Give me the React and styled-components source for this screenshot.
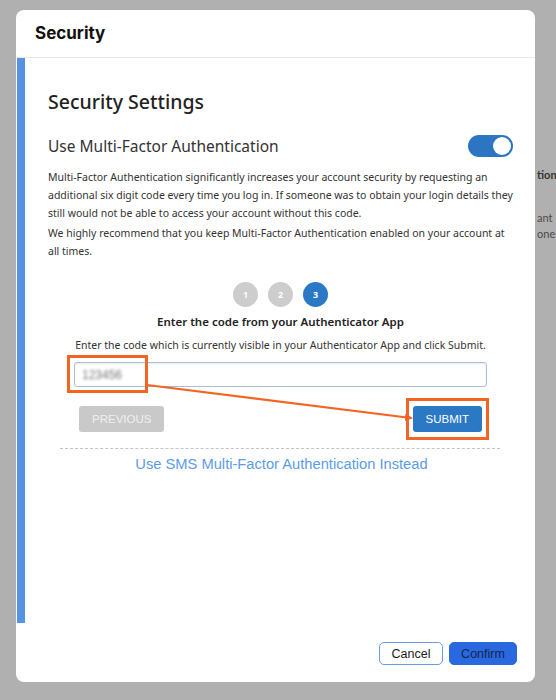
import styled, { createGlobalStyle } from "styled-components";

const GlobalStyle = createGlobalStyle`
  html, body {
    margin: 0;
    padding: 0;
    background: #b0b0b0;
  }
  * {
    box-sizing: border-box;
  }
`;

const segoe = `"Noto Sans", "Open Sans", sans-serif`;
const arial = `"Liberation Sans", Arial, sans-serif`;

const App = () => {
  return (
    <>
      <GlobalStyle />
      <Page>
        <Modal>
          <ModalHeader>Security</ModalHeader>
          <ModalBody>
            <Frame>
              <SettingsTitle>Security Settings</SettingsTitle>
              <ToggleRow>
                <ToggleLabel>Use Multi-Factor Authentication</ToggleLabel>
                <Toggle $on>
                  <Knob />
                </Toggle>
              </ToggleRow>
              <Paragraph $gap={11}>
                Multi-Factor Authentication significantly increases your account security by requesting an
                additional six digit code every time you log in. If someone was to obtain your login details they
                still would not be able to access your account without this code.
              </Paragraph>
              <Paragraph $gap={2}>
                We highly recommend that you keep Multi-Factor Authentication enabled on your account at
                all times.
              </Paragraph>

              {/* Setup wizard, step 3 */}
              <Wizard>
                <Steps>
                  <Step>1</Step>
                  <Step>2</Step>
                  <Step $active>3</Step>
                </Steps>
                <StepTitle>Enter the code from your Authenticator App</StepTitle>
                <StepText>Enter the code which is currently visible in your Authenticator App and click Submit.</StepText>
                <CodeInput>
                  <Blurred>123456</Blurred>
                </CodeInput>
                <WizardButtons>
                  <WizardButton $disabled>PREVIOUS</WizardButton>
                  <WizardButton>SUBMIT</WizardButton>
                </WizardButtons>
              </Wizard>
              <Divider />
              <SmsLink>Use SMS Multi-Factor Authentication Instead</SmsLink>
            </Frame>
          </ModalBody>
          <ModalFooter>
            <FooterButton>Cancel</FooterButton>
            <FooterButton $primary>Confirm</FooterButton>
          </ModalFooter>
        </Modal>

        {/* page behind the overlay, peeking out on the right */}
        <Behind>
          <BehindLine $bold $gap={157}>tion</BehindLine>
          <BehindLine $gap={27}>ant</BehindLine>
          <BehindLine $gap={0}>one</BehindLine>
        </Behind>

        {/* orange annotation drawn over the screenshot */}
        <Annotation width="556" height="700" viewBox="0 0 556 700">
          <defs>
            <marker id="arrow" markerWidth="8" markerHeight="8" refX="6" refY="4" orient="auto" markerUnits="userSpaceOnUse">
              <path d="M0,0 L8,4 L0,8 Z" fill="#f26522" />
            </marker>
          </defs>
          <rect x="68.5" y="356.5" width="78" height="35" fill="none" stroke="#f26522" strokeWidth="3" />
          <rect x="407.5" y="399.5" width="80" height="39" fill="none" stroke="#f26522" strokeWidth="3" />
          <line x1="147" y1="385" x2="411" y2="418" stroke="#f26522" strokeWidth="2" markerEnd="url(#arrow)" />
        </Annotation>
      </Page>
    </>
  );
};

export default App;

// Styled Components
const Page = styled.div`
  position: relative;
  width: 556px;
  height: 700px;
  padding: 10px 0 18px 16px;
  display: flex;
  overflow: hidden;
`;

const Modal = styled.div`
  width: 519px;
  height: 672px;
  flex-shrink: 0;
  background: #fff;
  border-radius: 8px;
  display: flex;
  flex-direction: column;
  overflow: hidden;
`;

const ModalHeader = styled.div`
  height: 48px;
  flex-shrink: 0;
  display: flex;
  align-items: center;
  padding: 0 19px 2px;
  border-bottom: 1px solid #e8e8e8;
  font-family: Inter, sans-serif;
  font-size: 17px;
  font-weight: 700;
  color: #111;
`;

const ModalBody = styled.div`
  flex: 1;
  display: flex;
  flex-direction: column;
`;

const Frame = styled.div`
  height: 565px;
  margin-left: 1px;
  border-left: 8px solid #5592e3;
  padding: 32px 20px 0 23px;
  font-family: ${segoe};
  color: #333;
`;

const SettingsTitle = styled.h2`
  margin: 0;
  font-size: 19.5px;
  line-height: 24px;
  font-weight: 500;
  color: #222;
`;

const ToggleRow = styled.div`
  margin-top: 21px;
  height: 22px;
  display: flex;
  align-items: center;
  justify-content: space-between;
`;

const ToggleLabel = styled.div`
  font-size: 15.5px;
  color: #333;
`;

const Toggle = styled.div`
  width: 45px;
  height: 22px;
  border-radius: 11px;
  padding: 2px;
  display: flex;
  justify-content: ${({ $on }) => ($on ? "flex-end" : "flex-start")};
  background: ${({ $on }) => ($on ? "#2b75c2" : "#ccc")};
  margin-right: 2px;
`;

const Knob = styled.div`
  width: 18px;
  height: 18px;
  border-radius: 50%;
  background: #fff;
`;

const Paragraph = styled.p`
  margin: ${({ $gap }) => $gap}px 0 0;
  font-size: 10.5px;
  line-height: 18px;
  color: #333;
`;

const Wizard = styled.div`
  margin: 22px 15px 0 12px;
  padding: 0 13px 0 14px;
  display: flex;
  flex-direction: column;
  align-items: stretch;
  text-align: center;
`;

const Steps = styled.div`
  display: flex;
  justify-content: center;
  gap: 10px;
`;

const Step = styled.div`
  width: 25px;
  height: 25px;
  border-radius: 50%;
  display: flex;
  align-items: center;
  justify-content: center;
  font-family: ${segoe};
  font-size: 9px;
  font-weight: 700;
  color: #fff;
  background: ${({ $active }) => ($active ? "#2b78c5" : "#cdcdcd")};
`;

const StepTitle = styled.div`
  margin-top: 7px;
  font-size: 11.5px;
  line-height: 16px;
  font-weight: 600;
  color: #222;
`;

const StepText = styled.div`
  margin-top: 7px;
  font-size: 10.5px;
  line-height: 16px;
  color: #333;
`;

const CodeInput = styled.div`
  margin-top: 9px;
  height: 25px;
  border: 1px solid #a9bfd6;
  border-radius: 3px;
  box-shadow: inset 0 1px 2px rgba(0, 0, 0, 0.08);
  display: flex;
  align-items: center;
  padding-left: 7px;
`;

const Blurred = styled.span`
  font-family: ${arial};
  font-size: 12px;
  color: #777;
  filter: blur(1.4px);
`;

const WizardButtons = styled.div`
  margin-top: 19px;
  padding: 0 5px;
  display: flex;
  justify-content: space-between;
`;

const WizardButton = styled.div`
  height: 26px;
  padding: 0 13px;
  border-radius: 3px;
  display: flex;
  align-items: center;
  font-family: ${arial};
  font-size: 11.5px;
  color: ${({ $disabled }) => ($disabled ? "#efefef" : "#fff")};
  background: ${({ $disabled }) => ($disabled ? "#c9c9c9" : "#2b78c5")};
`;

const Divider = styled.div`
  margin: 16px 15px 0 12px;
  border-top: 1px dashed #c4c4c4;
`;

const SmsLink = styled.div`
  margin-top: 6px;
  text-align: center;
  font-family: ${arial};
  font-size: 14.7px;
  line-height: 18px;
  color: #5c9ce6;
`;

const ModalFooter = styled.div`
  flex: 1;
  display: flex;
  justify-content: flex-end;
  align-items: flex-start;
  gap: 6px;
  padding: 19px 18px 0 0;
`;

const FooterButton = styled.div`
  height: 23px;
  padding: 0 11px;
  min-width: ${({ $primary }) => ($primary ? 68 : 64)}px;
  border-radius: 5px;
  display: flex;
  align-items: center;
  justify-content: center;
  font-family: ${arial};
  font-size: 12.5px;
  color: ${({ $primary }) => ($primary ? "#14254a" : "#1a1a1a")};
  background: ${({ $primary }) => ($primary ? "#2a68e0" : "#fff")};
  border: 1px solid ${({ $primary }) => ($primary ? "#2a68e0" : "#6b9be8")};
`;

const Behind = styled.div`
  flex: 1;
  padding-left: 2px;
  overflow: hidden;
  font-family: Lato, sans-serif;
  font-size: 11px;
  line-height: 16px;
`;

const BehindLine = styled.div`
  margin-top: ${({ $gap }) => $gap}px;
  white-space: nowrap;
  font-weight: ${({ $bold }) => ($bold ? 700 : 400)};
  color: ${({ $bold }) => ($bold ? "#333" : "#4a4a4a")};
`;

const Annotation = styled.svg`
  position: absolute;
  left: 0;
  top: 0;
  pointer-events: none;
`;
